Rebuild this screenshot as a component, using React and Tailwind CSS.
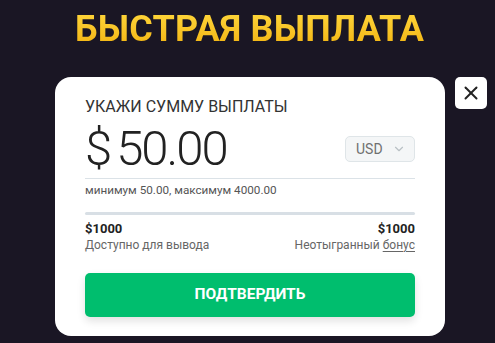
import { ChevronDown, X } from 'lucide-react'

export default function App() {
  return (
    <div
      className="w-[495px] h-[343px] overflow-hidden bg-[#1a1624] flex flex-col items-center"
      style={{ fontFamily: 'Roboto, "Noto Sans", sans-serif' }}
    >
      {/* Heading */}
      <h1 className="mt-[11px] ml-[4px] text-[36px] leading-[36px] font-bold tracking-[0.2px] bg-gradient-to-b from-[#ffd73a] to-[#f2b30c] bg-clip-text text-transparent">
        БЫСТРАЯ ВЫПЛАТА
      </h1>

      <div className="mt-[30px] w-full flex items-start pl-[55px]">
        {/* Card */}
        <div className="w-[390px] bg-white rounded-[16px] px-[30px] pt-[20px] pb-[19px]">
          <p className="text-[16px] leading-[19px] text-[#333]">УКАЖИ СУММУ ВЫПЛАТЫ</p>

          <div className="mt-[7px] flex items-center justify-between border-b border-[#dbe2e7] pb-[3px]">
            <div className="h-[52px] flex items-center text-[49px] leading-[52px] font-light text-[#222] tracking-[-2px]">
              $<span className="ml-[6px]">50.00</span>
            </div>
            <div className="w-[70px] h-[26px] rounded-[5px] border border-[#dfe5e8] bg-[#f4f6f7] flex items-center pl-[10px] gap-[9px]">
              <span className="text-[14px] text-[#707070]">USD</span>
              <ChevronDown className="w-[14px] h-[14px] text-[#b9c0c5]" strokeWidth={2} />
            </div>
          </div>

          <p className="mt-[4px] text-[11.7px] leading-[14px] text-[#555]">минимум 50.00, максимум 4000.00</p>

          <div className="mt-[15px] h-[3px] rounded-full bg-[#d8dfe5]" />

          <div className="mt-[6px] flex justify-between">
            <div>
              <p className="text-[13px] leading-[16px] font-bold text-[#222]">$1000</p>
              <p className="mt-[1px] text-[12px] leading-[15px] text-[#666]">Доступно для вывода</p>
            </div>
            <div className="text-right">
              <p className="text-[13px] leading-[16px] font-bold text-[#222]">$1000</p>
              <p className="mt-[1px] text-[12px] leading-[15px] text-[#666]">
                Неотыгранный <span className="underline underline-offset-2">бонус</span>
              </p>
            </div>
          </div>

          <button className="mt-[20px] w-full h-[44px] rounded-[5px] bg-[#00be6e] text-white text-[15.5px] font-bold shadow-[0_4px_8px_rgba(0,0,0,0.12)]">
            ПОДТВЕРДИТЬ
          </button>
        </div>

        {/* Close */}
        <button className="ml-[10px] w-[32px] h-[32px] rounded-[5px] bg-white flex items-center justify-center">
          <X className="w-[22px] h-[22px] text-[#222]" strokeWidth={2.2} />
        </button>
      </div>
    </div>
  )
}
